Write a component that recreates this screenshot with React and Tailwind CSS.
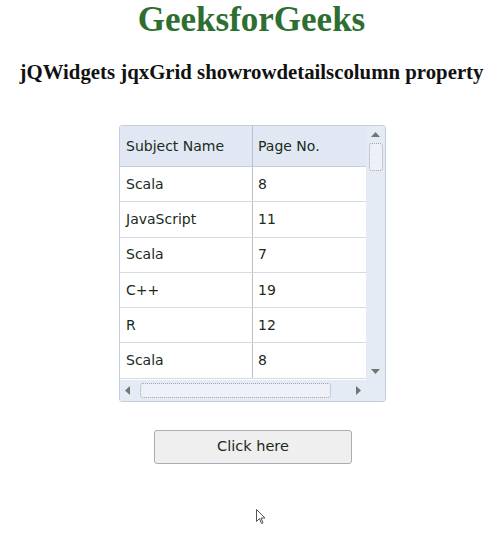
import React from 'react';

const ROWS = [
  { name: 'Scala', pages: '8' },
  { name: 'JavaScript', pages: '11' },
  { name: 'Scala', pages: '7' },
  { name: 'C++', pages: '19' },
  { name: 'R', pages: '12' },
  { name: 'Scala', pages: '8' },
];

const App = () => {
  return (
    <div className="relative w-[503px] h-[533px] bg-white overflow-hidden" style={{ fontFamily: '"Liberation Serif", serif' }}>
      {/* Headings */}
      <h1 className="text-center text-[35px] leading-[40px] font-bold text-[#2e6e31]">GeeksforGeeks</h1>
      <h3 className="text-center text-[20.8px] leading-[24px] font-bold text-[#111] mt-[20px]">
        jQWidgets jqxGrid showrowdetailscolumn property
      </h3>

      {/* Grid */}
      <div className="mt-[41px] ml-[119px] w-[267px] h-[277px] border border-[#c5cdd8] rounded-[3px] flex flex-col overflow-hidden text-[14px] text-[#1b2a1b]" style={{ fontFamily: '"DejaVu Sans", Verdana, sans-serif' }}>
        <div className="flex flex-1 min-h-0">
          <div className="flex-1 flex flex-col min-w-0">
            <div className="flex h-[41px] shrink-0 bg-[#e1e8f3] border-b border-[#c5cdd8]">
              <div className="w-[133px] flex items-center pl-[6px] border-r border-[#b9c1cc]">Subject Name</div>
              <div className="flex-1 flex items-center pl-[5px]">Page No.</div>
            </div>
            {ROWS.map((r, i) => (
              <div key={i} className="flex h-[35.3px] shrink-0 bg-white border-b border-[#d6dbe2]">
                <div className="w-[133px] flex items-center pl-[6px] border-r border-[#b9c1cc]">{r.name}</div>
                <div className="flex-1 flex items-center pl-[5px]">{r.pages}</div>
              </div>
            ))}
          </div>
          {/* vertical scrollbar */}
          <div className="w-[19px] bg-[#e5ebf4] flex flex-col items-center pt-[6px]">
            <svg width="9" height="5" viewBox="0 0 9 5"><path d="M4.5 0 L9 5 L0 5 Z" fill="#6b7a70" /></svg>
            <div className="mt-[6px] w-[14px] h-[28px] rounded-[3px] border border-dotted border-[#9aa4ae] bg-[#edf1f7]" />
            <div className="flex-1" />
            <svg width="9" height="5" viewBox="0 0 9 5" className="mb-[6px]"><path d="M0 0 L9 0 L4.5 5 Z" fill="#6b7a70" /></svg>
          </div>
        </div>
        {/* horizontal scrollbar */}
        <div className="h-[21px] bg-[#e5ebf4] flex items-center pl-[5px] pr-[4px]">
          <svg width="5" height="9" viewBox="0 0 5 9"><path d="M0 4.5 L5 0 L5 9 Z" fill="#6b7a70" /></svg>
          <div className="ml-[10px] w-[191px] h-[15px] rounded-[3px] border border-dotted border-[#9aa4ae] bg-[#edf1f7]" />
          <div className="flex-1" />
          <svg width="5" height="9" viewBox="0 0 5 9" className="mr-[20px]"><path d="M0 0 L5 4.5 L0 9 Z" fill="#6b7a70" /></svg>
        </div>
      </div>

      {/* Button */}
      <button className="block mt-[28px] ml-[154px] w-[198px] h-[34px] bg-[#efefef] border border-[#a9aeb3] rounded-[3px] text-[14.5px] text-[#1b2a1b]" style={{ fontFamily: '"DejaVu Sans", Verdana, sans-serif' }}>
        Click here
      </button>

      {/* mouse cursor */}
      <svg className="absolute left-[256px] top-[509px]" width="10" height="16" viewBox="0 0 10 16">
        <path d="M0.5 0.5 L0.5 12.5 L3.5 9.5 L5.5 14.5 L7 13.8 L5 9 L9 9 Z" fill="#fff" stroke="#555" strokeWidth="1" />
      </svg>
    </div>
  );
};

export default App;
